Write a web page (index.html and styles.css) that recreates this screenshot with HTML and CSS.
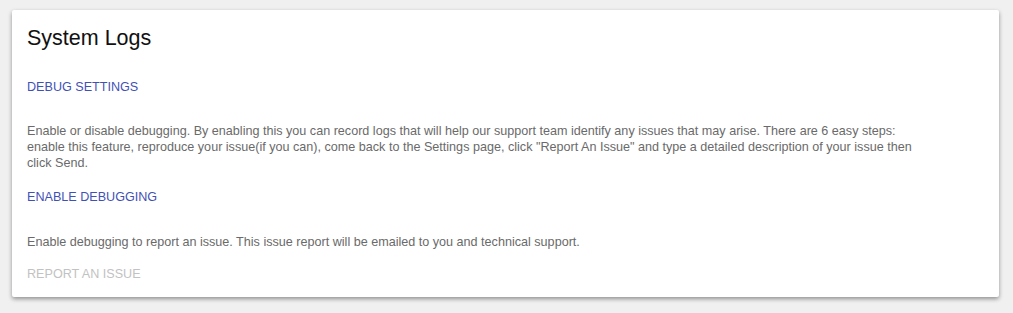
FILE: index.html
```html
<!DOCTYPE html>
<html lang="en">
<head>
  <meta charset="UTF-8" />
  <title>System Logs</title>
  <link rel="stylesheet" href="styles.css">
</head>
<body>
  <div class="card">
    <h1>System Logs</h1>

    <button class="flat-btn">Debug Settings</button>

    <p class="hint">
      Enable or disable debugging. By enabling this you can record logs that will help our support team identify any issues that may arise. There are 6 easy steps: enable this feature, reproduce your issue(if you can), come back to the Settings page, click "Report An Issue" and type a detailed description of your issue then click Send.
    </p>

    <button class="flat-btn">Enable Debugging</button>

    <p class="hint hint-short">
      Enable debugging to report an issue. This issue report will be emailed to you and technical support.
    </p>

    <button class="flat-btn" disabled>Report An Issue</button>
  </div>
</body>
</html>
```

FILE: styles.css
```css
* {
  box-sizing: border-box;
  font-family: 'Liberation Sans', Arial, sans-serif;
}

body {
  margin: 0;
  background: #f0f0f0;
  padding: 10px 14px 16px 12px;
}

.card {
  background: #fff;
  border-radius: 2px;
  box-shadow: 0 2px 4px rgba(0, 0, 0, 0.4);
  padding: 14px 15px 6px;
  display: flex;
  flex-direction: column;
  align-items: flex-start;
}

.card h1 {
  margin: 0;
  font-size: 21.5px;
  line-height: 28px;
  font-weight: 400;
  color: #111;
}

.flat-btn {
  height: 36px;
  padding: 2px 0 0;
  border: none;
  background: none;
  font-size: 12.6px;
  text-transform: uppercase;
  color: #3f51b5;
  cursor: pointer;
}

.flat-btn:disabled {
  color: #c2c2c2;
  cursor: default;
}

.card h1 + .flat-btn { margin-top: 16px; }

.hint {
  margin: 19px 0 7px;
  max-width: 895px;
  font-size: 12.6px;
  line-height: 16px;
  color: #6a6a6a;
}

.hint-short { margin: 20px 0 5px; }
```
